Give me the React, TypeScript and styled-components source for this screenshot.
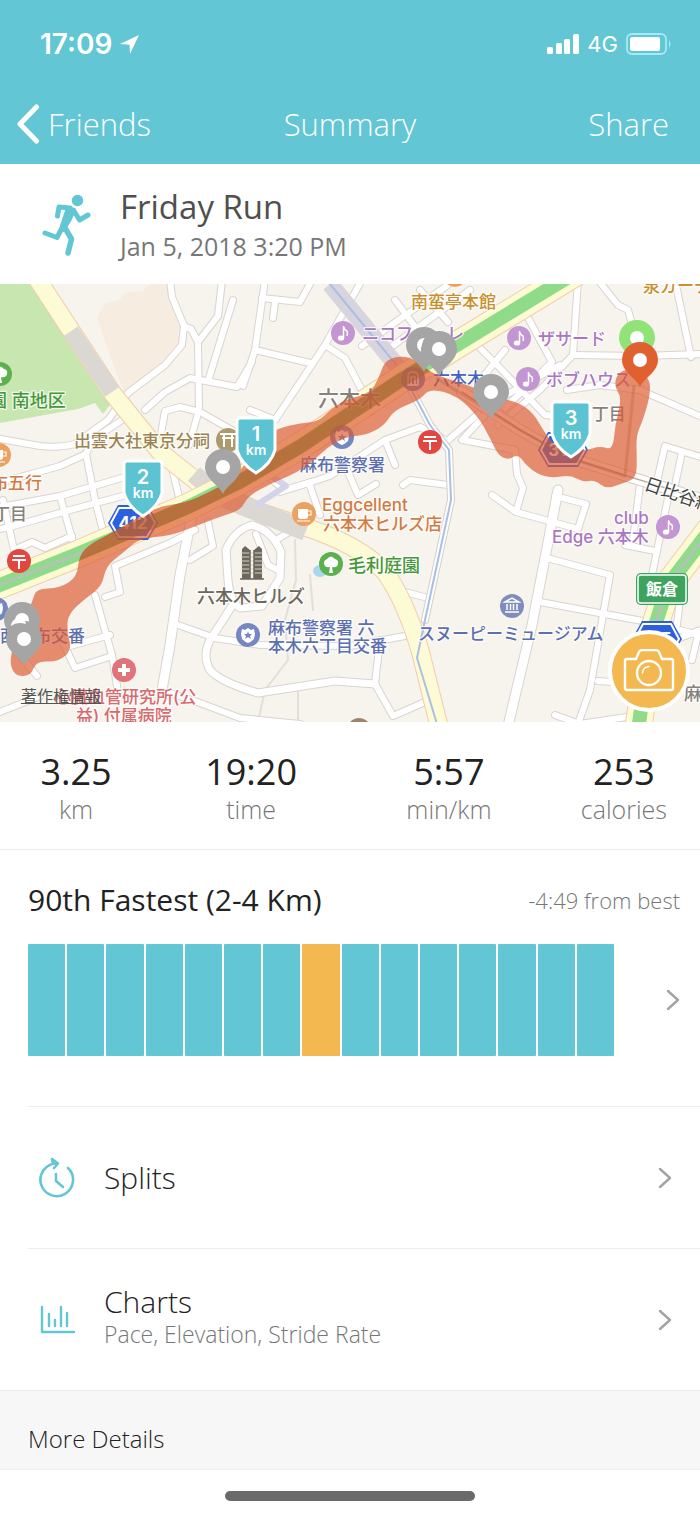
import React from "react";
import styled, { createGlobalStyle } from "styled-components";

const teal = "#62c6d5";
const amber = "#f3b950";
const uiFont = '"Open Sans", "Noto Sans", "Noto Sans CJK JP", sans-serif';
const mapFont = 'Inter, "Noto Sans CJK JP", sans-serif';

const GlobalStyle = createGlobalStyle`
  * { box-sizing: border-box; }
  body {
    margin: 0;
    background: #fff;
    color: #222;
    font-family: ${uiFont};
  }
  button { font-family: inherit; color: inherit; border: 0; padding: 0; background: none; cursor: pointer; }
  h1, h2, h3, p, dl, dt, dd { margin: 0; font-weight: 400; }
  svg { display: block; }
`;

const Screen = styled.div`
  display: flex;
  flex-direction: column;
  min-height: 100vh;
`;

const TopBar = styled.header`
  background: ${teal};
  color: #fff;
`;

const StatusBar = styled.div`
  display: flex;
  align-items: center;
  justify-content: space-between;
  height: 84px;
  padding: 4px 28px 0 40px;
  font-family: Inter, sans-serif;
`;

const StatusGroup = styled.div`
  display: flex;
  align-items: center;
  gap: 8px;
`;

const Clock = styled.span`
  font-size: 28px;
  font-weight: 600;
  line-height: 32px;
`;

const Network = styled.span`
  font-size: 22px;
  font-weight: 400;
  line-height: 32px;
`;

const NavBar = styled.nav`
  display: grid;
  grid-template-columns: 1fr auto 1fr;
  align-items: center;
  height: 80px;
  padding: 0 31px 0 16px;
`;

const NavTitle = styled.h1`
  font-size: 31px;
  font-weight: 300;
  line-height: 40px;
  padding-left: 15px;
`;

const NavButton = styled.button<{ $end?: boolean }>`
  display: flex;
  align-items: center;
  gap: 8px;
  justify-self: ${(p) => (p.$end ? "end" : "start")};
  font-size: 31px;
  font-weight: 300;
  line-height: 40px;
`;

const Activity = styled.section`
  display: flex;
  align-items: center;
  height: 120px;
  padding: 0 28px 0 40px;
  gap: 28px;
`;

const ActivityName = styled.h2`
  font-size: 33px;
  line-height: 44px;
  color: #4f4f4f;
`;

const ActivityDate = styled.p`
  font-size: 25px;
  line-height: 34px;
  color: #777;
`;

const MapPanel = styled.section`
  position: relative;
  overflow: hidden;
  background: #f7f4ee;
`;

const MapCanvas = styled.svg`
  width: 100%;
  height: auto;
  font-family: ${mapFont};
`;

const LegalLink = styled.a`
  position: absolute;
  left: 3%;
  bottom: 16px;
  font-family: ${mapFont};
  font-size: 16px;
  line-height: 20px;
  color: #555;
`;

const CameraButton = styled.button`
  position: absolute;
  right: 10px;
  bottom: 10px;
  display: grid;
  place-items: center;
  width: 82px;
  height: 82px;
  border: 4px solid #fff;
  border-radius: 50%;
  background: ${amber};
`;

const Stats = styled.dl`
  display: grid;
  grid-template-columns: 10fr 13fr 13fr 10fr;
  height: 128px;
  padding-top: 26px;
  border-bottom: 1px solid #ececec;
  text-align: center;
`;

const Stat = styled.div`
  display: flex;
  flex-direction: column-reverse;
  justify-content: flex-end;
`;

const StatValue = styled.dd`
  font-size: 36px;
  line-height: 48px;
`;

const StatLabel = styled.dt`
  font-size: 25px;
  font-weight: 350;
  line-height: 26px;
  color: #777;
`;

const Ranking = styled.section`
  height: 256px;
  padding: 28px 20px 0 28px;
`;

const RankingHead = styled.div`
  display: flex;
  align-items: center;
  justify-content: space-between;
  line-height: 44px;
`;

const RankingTitle = styled.h2`
  font-size: 30px;
`;

const RankingNote = styled.p`
  font-size: 22px;
  font-weight: 350;
  color: #777;
`;

const RankingButton = styled.button`
  display: flex;
  align-items: center;
  width: 100%;
  margin-top: 22px;
`;

const Bars = styled.span`
  display: flex;
  flex: 1;
  gap: 2px;
  height: 112px;
  margin-right: 52px;
`;

const Bar = styled.span<{ $current: boolean }>`
  flex: 1;
  border-radius: 1px;
  background: ${(p) => (p.$current ? amber : teal)};
`;

const List = styled.div`
  padding-left: 28px;
`;

const ListRow = styled.button`
  display: flex;
  align-items: center;
  width: 100%;
  height: 142px;
  padding: 0 28px 0 10px;
  border-top: 1px solid #ececec;
  text-align: left;
`;

const RowIcon = styled.span`
  width: 66px;
`;

const RowText = styled.span`
  display: flex;
  flex: 1;
  flex-direction: column;
`;

const RowTitle = styled.span`
  font-size: 30px;
  font-weight: 350;
  line-height: 36px;
`;

const RowDetail = styled.span`
  margin-bottom: 8px;
  font-size: 23px;
  font-weight: 350;
  line-height: 28px;
  color: #777;
`;

const Details = styled.section`
  height: 80px;
  padding: 30px 28px 0;
  border-top: 1px solid #e8e8e8;
  border-bottom: 1px solid #eee;
  background: #f7f7f7;
`;

const DetailsTitle = styled.h3`
  font-size: 24px;
  font-weight: 350;
  line-height: 36px;
`;

const HomeArea = styled.footer`
  display: flex;
  justify-content: center;
  padding: 21px 0 15px;
`;

const HomeIndicator = styled.span`
  width: 250px;
  height: 10px;
  border-radius: 5px;
  background: #6a6a6a;
`;

const Chevron = () => (
  <svg width="14" height="24" viewBox="0 0 14 24" fill="none" stroke="#a3a3a3" strokeWidth="2.4" strokeLinecap="round" strokeLinejoin="round" aria-hidden="true">
    <path d="M2 3l10 9-10 9" />
  </svg>
);

/* ---------- map drawing ---------- */

const streets = [
  "M170 280L172 297L184 326L182 345L165 365L128 393L108 420L75 444Q60 448 40 446L-5 438",
  "M184 326L191 329L198 342L218 316L222 280",
  "M198 342L199 410L189 445",
  "M233 300L209 378",
  "M145 410L165 392L190 378L237 387L252 362",
  "M160 440L165 411L180 407L200 412L232 430",
  "M-5 484L60 466L86 454L92 440L122 420",
  "M-5 508L60 496L135 474",
  "M86 454L95 500L108 550",
  "M170 460L181 505",
  "M60 496L78 560",
  "M-5 530L10 527L70 510L130 494",
  "M3 500L14 550L32 542L45 548L72 536",
  "M265 280L255 350L243 386",
  "M255 350L310 363",
  "M262 298L300 302L312 280",
  "M275 302L273 318",
  "M362 280L325 345L275 420L250 410",
  "M325 345L345 358L366 398",
  "M362 346L452 282",
  "M384 352L470 290",
  "M395 300L425 340",
  "M420 290L448 322",
  "M280 492L330 476L385 440L420 427L447 441L478 414",
  "M385 440L395 465",
  "M270 478L284 490L312 482",
  "M310 486L320 515",
  "M345 465L358 495L376 484",
  "M403 485L410 480L448 485",
  "M578 280L573 355L540 390L498 425",
  "M573 355L640 356L704 354",
  "M598 280L618 305L628 310L635 335",
  "M675 280L691 357",
  "M480 348L500 368L545 415L570 418",
  "M505 350L482 378",
  "M527 316L552 362L505 408",
  "M506 395L560 365",
  "M484 416L462 440L515 450L517 474L523 488L516 512L492 495",
  "M640 390L704 418",
  "M567 390L600 385L640 390",
  "M655 490L665 446L704 458",
  "M682 452L674 490",
  "M555 496L586 504L578 529L516 512",
  "M547 558L610 575L603 615L590 690L578 724",
  "M540 602L648 622",
  "M640 485L633 540M625 545L655 551",
  "M668 498L652 575",
  "M680 600L675 640L700 630",
  "M680 630L698 635L692 660",
  "M598 681L640 684",
  "M555 715L580 724L640 715",
  "M95 595L112 655L118 692",
  "M105 597L120 592L115 566L170 543L195 530",
  "M60 636L75 668L112 656",
  "M70 646L110 635",
  "M20 655L37 676",
  "M0 712L40 696",
  "M190 560L213 546L208 522",
  "M178 625L215 638L260 645L350 646L405 636",
  "M162 690L200 703L240 718L300 724",
  "M375 684L380 640",
  "M375 684L393 716L425 702",
  "M405 592L428 598",
  "M296 528L276 540",
  "M256 534L268 565L278 570",
];

const wideStreets = [
  "M558 490L545 558L532 625L508 726",
  "M192 515L180 575L170 645L162 690",
];

const plazaStreets = [
  "M281 552L280 578L262 606L240 608Q230 602 228 580L226 550Q234 530 252 525Q272 530 281 552Z",
  "M232 606L210 640Q202 656 210 670Q220 682 258 693L335 681L375 684",
];

const trackPoints: [number, number][] = [
  [33, 600], [36, 589], [60, 588], [77, 577], [79, 556], [90, 544], [110, 534], [135, 519], [160, 506],
  [185, 503], [210, 492], [235, 478], [255, 450], [272, 430], [300, 423], [318, 422], [332, 408], [348, 399],
  [370, 393], [379, 378], [384, 362], [397, 356], [414, 358], [432, 374], [465, 384], [500, 398], [520, 403],
  [534, 414], [543, 430], [556, 448], [585, 451], [600, 446], [613, 450], [615, 425], [622, 398], [614, 386],
  [618, 372], [634, 368], [650, 378], [650, 396], [643, 420], [636, 436], [637, 460], [636, 478], [624, 483],
  [606, 489], [595, 480], [583, 482], [570, 475], [552, 478], [537, 474], [525, 464], [518, 454], [508, 460],
  [498, 455], [490, 438], [479, 418], [458, 396], [430, 388], [420, 400], [394, 410], [384, 426], [366, 435],
  [345, 437], [328, 447], [312, 462], [296, 473], [270, 484], [248, 496], [241, 510], [222, 516], [196, 526],
  [170, 536], [140, 538], [124, 552], [106, 566], [102, 586], [86, 598], [68, 614], [67, 632], [72, 650],
  [58, 662], [36, 661], [31, 676], [14, 676], [9, 658], [20, 630],
];

/* Closed curve through the midpoints of neighbouring points. */
const smooth = (points: [number, number][]) => {
  const mid = (i: number) => {
    const a = points[i % points.length];
    const b = points[(i + 1) % points.length];
    return `${(a[0] + b[0]) / 2} ${(a[1] + b[1]) / 2}`;
  };
  return `M${mid(0)}${points.map((_, i) => {
    const p = points[(i + 1) % points.length];
    return `Q${p[0]} ${p[1]} ${mid(i + 1)}`;
  }).join("")}Z`;
};

const trackPath = smooth(trackPoints);

const Shield = ({ x, y, n }: { x: number; y: number; n: string }) => (
  <g transform={`translate(${x} ${y})`}>
    <path d="M-16 2H16Q19 2 19 5V34Q15 48 0 57Q-15 48 -19 34V5Q-19 2 -16 2Z" fill="#5bc3d2" stroke="#fff" strokeWidth="3" />
    <text textAnchor="middle" y="25" fontSize="20" fontWeight="600" fill="#fff">{n}</text>
    <text textAnchor="middle" y="39" fontSize="14" fontWeight="600" fill="#fff">km</text>
  </g>
);

const Pin = ({ x, y, color = "#a5a5a5" }: { x: number; y: number; color?: string }) => (
  <g transform={`translate(${x} ${y})`}>
    <path d="M0 27C-3 19 -18 12 -18 0A18 18 0 0 1 18 0C18 12 3 19 0 27Z" fill={color} />
    <circle r="7" fill="#fff" />
  </g>
);

type PoiKind = "music" | "post" | "cup" | "tree" | "police" | "museum" | "cross" | "shrine" | "plain";
const poiColors: Record<PoiKind, string> = {
  music: "#c495d3", post: "#e2463f", cup: "#eba15f", tree: "#5cb14c", police: "#7487c2",
  museum: "#7f8dbd", cross: "#e07478", shrine: "#ae9b6b", plain: "#9f8468",
};

const Poi = ({ x, y, kind }: { x: number; y: number; kind: PoiKind }) => (
  <g transform={`translate(${x} ${y})`} stroke="#fff" fill="none" strokeWidth="2">
    <circle r="12" fill={poiColors[kind]} stroke="none" />
    {kind === "music" && (
      <>
        <ellipse cx="-2" cy="5" rx="3.200" ry="2.600" fill="#fff" stroke="none" />
        <path d="M0.500 5V-7Q1 -3 4 -2Q5 0 4 3" strokeWidth="1.500" />
      </>
    )}
    {kind === "post" && <path d="M-6 -5H6M-7 -1H7M0 -1V8" />}
    {kind === "cup" && (
      <>
        <path d="M-6 -5H4V2Q4 5 1 5H-3Q-6 5 -6 2Z" fill="#fff" stroke="none" />
        <path d="M4 -3H7V1H4M-7 7H6" strokeWidth="1.200" />
      </>
    )}
    {kind === "tree" && (
      <path d="M-2 9L-1 3Q-7 4 -7 -1Q-7 -4 -4 -5Q0 -10 4 -5Q8 -4 7 0Q6 4 1 3L2 9Z" fill="#fff" stroke="none" />
    )}
    {kind === "police" && (
      <>
        <path d="M-6 -6L-3 -5L0 -7L3 -5L6 -6L7 -1L6 4Q3 7 0 8Q-3 7 -6 4L-7 -1Z" fill="#fff" stroke="none" />
        <path d="M0 -4L1 -1H4L2 1L3 4L0 2L-3 4L-2 1L-4 -1H-1Z" fill={poiColors.police} stroke="none" />
      </>
    )}
    {kind === "museum" && <path d="M-7 -4L0 -8L7 -4ZM-5 -2V4M-1.500 -2V4M1.500 -2V4M5 -2V4M-7 6H7" strokeWidth="1.500" />}
    {kind === "cross" && <path d="M0 -6V6M-6 0H6" strokeWidth="4" />}
    {kind === "shrine" && <path d="M-8 -6H8M-6 -2H6M-4 -6V7M4 -6V7" />}
  </g>
);

const RouteBadge = ({ x, y, n }: { x: number; y: number; n: string }) => (
  <g transform={`translate(${x} ${y})`}>
    <path d="M-15 -18H15L25 0L15 17H-15L-25 0Z" fill="#2b60de" strokeLinejoin="round" />
    <path d="M-14 -15H14L22 0L14 14H-14L-22 0Z" fill="none" stroke="#fff" strokeWidth="2" strokeLinejoin="round" />
    <text textAnchor="middle" y="6" fontSize="17" fontWeight="700" fill="#fff">{n}</text>
  </g>
);

const c = {
  gold: "#c8902c", violet: "#a877c2", grey: "#85817c", indigo: "#5c6fae", blue: "#4762bd",
  olive: "#9b8450", green: "#46993a", orange: "#d17b40", stone: "#6c675c", red: "#d8696c",
};

const labels: { x: number; y: number; s?: number; fill: string; t: string }[] = [
  { x: 411, y: 308, fill: c.gold, t: "南蛮亭本館" },
  { x: 643, y: 292, fill: c.gold, t: "泉ガーデン" },
  { x: 362, y: 340, fill: c.violet, t: "ニコファーレ" },
  { x: 538, y: 345, fill: c.violet, t: "ザサード" },
  { x: 546, y: 386, fill: c.violet, t: "ボブハウス" },
  { x: 318, y: 406, s: 21, fill: c.grey, t: "六本木" },
  { x: 433, y: 385, fill: c.blue, t: "六本木" },
  { x: 300, y: 471, fill: c.indigo, t: "麻布警察署" },
  { x: 74, y: 447, fill: c.olive, t: "出雲大社東京分祠" },
  { x: -11, y: 407, s: 18, fill: c.green, t: "園 南地区" },
  { x: -9, y: 489, fill: c.orange, t: "布五行" },
  { x: -7, y: 520, fill: c.grey, t: "丁目" },
  { x: 322, y: 511, fill: c.orange, t: "Eggcellent" },
  { x: 323, y: 530, fill: c.orange, t: "六本木ヒルズ店" },
  { x: 614, y: 524, fill: c.violet, t: "club" },
  { x: 552, y: 543, fill: c.violet, t: "Edge 六本木" },
  { x: 348, y: 572, s: 18, fill: c.green, t: "毛利庭園" },
  { x: 197, y: 603, s: 18, fill: c.stone, t: "六本木ヒルズ" },
  { x: 268, y: 634, fill: c.indigo, t: "麻布警察署 六" },
  { x: 268, y: 652, fill: c.indigo, t: "本木六丁目交番" },
  { x: 418, y: 640, fill: c.indigo, t: "スヌーピーミュージアム" },
  { x: 0, y: 642, fill: c.indigo, t: "西麻布交番" },
  { x: 581, y: 420, fill: c.grey, t: "3丁目" },
  { x: 54, y: 703, fill: c.red, t: "心臓血管研究所(公" },
  { x: 76, y: 722, fill: c.red, t: "益) 付属病院" },
  { x: 684, y: 700, s: 18, fill: c.grey, t: "麻布" },
];

const RouteMap = () => (
  <MapCanvas viewBox="0 284 700 438" role="img" aria-label="Route map">
    <defs>
      <clipPath id="track-area">
        <path d={trackPath} />
      </clipPath>
    </defs>
    <rect y="284" width="700" height="438" fill="#f7f4ee" />
    <path d="M0 284H30L112 402L103 414L95 403L78 409L0 423Z" fill="#c7e6b0" />
    <path d="M97 318L105 303L120 300L125 293L143 291L150 284H168L182 322V345L165 365L125 392L117 375L108 350Z" fill="#f6ede0" />
    <ellipse cx="320" cy="571" rx="7" ry="6" fill="#a9d8ee" />

    <g fill="none" strokeLinejoin="round" strokeLinecap="round">
      <g stroke="#e2deda" strokeWidth="2">
        <path d="M295 540L296 580L285 620L288 660L265 690L258 722" />
        <path d="M298 690V722M310 575L313 610" />
      </g>
      <g stroke="#d8d4d2">
        {streets.map((d) => <path key={d} d={d} strokeWidth="8" />)}
        {plazaStreets.map((d) => <path key={d} d={d} strokeWidth="9" />)}
        {wideStreets.map((d) => <path key={d} d={d} strokeWidth="11" />)}
      </g>
      <g stroke="#fff">
        {streets.map((d) => <path key={d} d={d} strokeWidth="6" />)}
        {plazaStreets.map((d) => <path key={d} d={d} strokeWidth="7" />)}
        {wideStreets.map((d) => <path key={d} d={d} strokeWidth="9" />)}
      </g>

      {[["#d3cecd", 12], ["#fff", 10]].map(([stroke, w]) => (
        <path key={stroke} d="M462 392L520 430L570 458L640 480L704 500" stroke={stroke as string} strokeWidth={w} />
      ))}
      <path d="M462 392L520 430L570 458L640 480L704 500" stroke="#b9b3a6" strokeWidth="1.500" />

      {/* railway corridor */}
      <path d="M330 284L402 372" stroke="#d8d4dd" strokeWidth="17" strokeLinecap="butt" />
      <path d="M402 372L430 425L449 450L451 500L425 620" stroke="#d3cecd" strokeWidth="8" />
      <path d="M402 372L430 425L449 450L451 500L425 620" stroke="#fff" strokeWidth="6" />

      {/* avenues */}
      {[["#f1cda9", 19], ["#fdfbd5", 17]].map(([stroke, w]) => (
        <g key={stroke} stroke={stroke as string} strokeWidth={w}>
          <path d="M38 280L72 332L113 394L160 452L200 484L260 512L305 527Q360 545 385 572Q405 600 420 650L440 730" />
        </g>
      ))}
      <g stroke="#dbd7d2" strokeLinecap="butt">
        <path d="M71 331L112 392" strokeWidth="17" />
        <path d="M194 474L214 492" strokeWidth="18" />
        <path d="M225 498L306 531" strokeWidth="20" />
      </g>
      <path d="M258 504L286 486L262 470" stroke="#d3d3ea" strokeWidth="6" />
      <path d="M330 284L402 372L430 425L449 450L451 500L425 620L417 658L437 724" stroke="#a9bfe4" strokeWidth="2" />

      {/* expressways */}
      {[["#f1cda9", 28], ["#fcfbd2", 26], ["#8fdb8a", 14]].map(([stroke, w]) => (
        <g key={stroke} stroke={stroke as string} strokeWidth={w}>
          <path d="M-10 589L80 553L190 506L240 481L300 446L400 380L460 343L580 270" />
          <path d="M710 530L668 585L652 635L638 730" />
        </g>
      ))}
      <path d="M-10 589L80 553L190 506M710 530L668 585L652 635" stroke="#b3c3b5" strokeWidth="3" />
    </g>

    <Poi x={343} y={333} kind="music" />
    <Poi x={519} y={338} kind="music" />
    <Poi x={528} y={379} kind="music" />
    <Poi x={668} y={527} kind="music" />
    <Poi x={430} y={442} kind="post" />
    <Poi x={19} y={561} kind="post" />
    <Poi x={304} y={514} kind="cup" />
    <Poi x={-1} y={455} kind="cup" />
    <Poi x={455} y={275} kind="cup" />
    <Poi x={331} y={564} kind="tree" />
    <Poi x={0} y={374} kind="tree" />
    <Poi x={342} y={437} kind="police" />
    <Poi x={248} y={635} kind="police" />
    <Poi x={-4} y={609} kind="police" />
    <Poi x={512} y={606} kind="museum" />
    <Poi x={124} y={670} kind="cross" />
    <Poi x={228} y={440} kind="shrine" />
    <Poi x={359} y={730} kind="plain" />

    {/* station */}
    <g transform="translate(413 379)" fill="none" stroke="#fff" strokeWidth="1.500">
      <circle r="12" fill="#5f79c8" stroke="none" />
      <path d="M-5 6V-3Q-5 -7 0 -7Q5 -7 5 -3V6ZM-2 6V-2H2V6" />
    </g>

    {/* twin towers landmark */}
    <g transform="translate(252 563)">
      <path d="M-10 16V-14L-7 -17L-2 -13V16ZM2 16V-13L7 -17L10 -14V16Z" fill="#6c675c" />
      <path d="M-11 -10H11M-11 -6H11M-11 -2H11M-11 2H11M-11 6H11M-11 10H11" stroke="#d5d0c5" strokeWidth="1" />
      <path d="M-12 16H12M-2 -13V16M2 -13V16" stroke="#6c675c" strokeWidth="1.500" />
    </g>

    <RouteBadge x={133} y={523} n="412" />
    <RouteBadge x={563} y={450} n="319" />
    <RouteBadge x={657} y={639} n="415" />
    <g>
      <rect x="636" y="573" width="52" height="32" rx="5" fill="#3da35d" />
      <rect x="638" y="575" width="48" height="28" rx="3" fill="none" stroke="#fff" strokeWidth="1.500" />
      <text x="662" y="595" textAnchor="middle" fontSize="16" fontWeight="600" fill="#fff">飯倉</text>
    </g>

    <g fontWeight="500" stroke="#fff" strokeOpacity=".8" strokeWidth="2.500" strokeLinejoin="round" paintOrder="stroke">
      {labels.map((l) => (
        <text key={`${l.x}-${l.y}`} x={l.x} y={l.y} fontSize={l.s ?? 17} fill={l.fill}>{l.t}</text>
      ))}
      <text transform="translate(643 489) rotate(19)" fontSize="18" fontWeight="400" fill="#444">日比谷線</text>
    </g>

    <path d={trackPath} fill="#dd5a30" fillOpacity=".68" />
    <g clipPath="url(#track-area)" fill="none" strokeLinejoin="round">
      <path d="M70 557L190 506L240 482L300 447L400 381L432 362" stroke="#a8602c" strokeOpacity=".5" strokeWidth="14" />
      <path d="M436 378L520 430L570 458L625 476L634 385" stroke="#b8623f" strokeOpacity=".35" strokeWidth="3" />
    </g>

    <Pin x={424} y={345} />
    <Pin x={439} y={349} />
    <path d="M424 338Q416 343 420 352Q422 343 424 338Z" fill="#fff" />
    <Pin x={491} y={392} />
    <Pin x={223} y={467} />
    <Pin x={22} y={620} />
    <Pin x={24} y={639} />
    <path d="M11 626Q12 618 20 618Q25 619 26 624Q17 621 11 626Z" fill="#fff" />
    <Pin x={637} y={338} color="#91e277" />
    <Pin x={640} y={360} color="#e1602f" />
    <Shield x={256} y={416} n="1" />
    <Shield x={143} y={459} n="2" />
    <Shield x={571} y={400} n="3" />
  </MapCanvas>
);

const stats = [
  { value: "3.25", label: "km" },
  { value: "19:20", label: "time" },
  { value: "5:57", label: "min/km" },
  { value: "253", label: "calories" },
];

const BAR_COUNT = 15;
const CURRENT_BAR = 7;

export default function App() {
  return (
    <Screen>
      <GlobalStyle />
      <TopBar>
        <StatusBar>
          <StatusGroup>
            <Clock>17:09</Clock>
            <svg width="19" height="19" viewBox="0 0 19 19" fill="#fff" aria-hidden="true">
              <path d="M19 0L10 19L9.500 9.800L0 9Z" />
            </svg>
          </StatusGroup>
          <StatusGroup>
            <svg width="32" height="20" viewBox="0 0 32 20" fill="#fff" aria-hidden="true">
              <rect y="13" width="6" height="7" rx="1.500" />
              <rect x="9" y="9" width="6" height="11" rx="1.500" />
              <rect x="17" y="5" width="6" height="15" rx="1.500" />
              <rect x="26" width="6" height="20" rx="1.500" />
            </svg>
            <Network>4G</Network>
            <svg width="46" height="22" viewBox="0 0 46 22" aria-hidden="true">
              <rect x="1" y="1" width="39" height="20" rx="5" fill="none" stroke="#a5ebf3" strokeWidth="1.800" />
              <rect x="4" y="4" width="30" height="14" rx="2" fill="#fff" />
              <path d="M43 7Q46 11 43 15Z" fill="#a5ebf3" />
            </svg>
          </StatusGroup>
        </StatusBar>
        <NavBar>
          <NavButton type="button">
            <svg width="24" height="40" viewBox="0 0 24 40" fill="none" stroke="#fff" strokeWidth="5" strokeLinecap="round" strokeLinejoin="round" aria-hidden="true">
              <path d="M20.500 3L4 20l16.500 17" />
            </svg>
            Friends
          </NavButton>
          <NavTitle>Summary</NavTitle>
          <NavButton type="button" $end>Share</NavButton>
        </NavBar>
      </TopBar>

      <main>
        <Activity>
          <svg width="52" height="64" viewBox="0 0 52 64" fill="none" stroke={teal} strokeWidth="5" strokeLinecap="round" strokeLinejoin="round" aria-hidden="true">
            <circle cx="37.500" cy="8.500" r="5.700" fill={teal} stroke="none" />
            <path d="M17.500 24L19 15L30 16" />
            <path d="M34 19L39.500 28L48 23" />
            <path d="M28 16L34 18L29 29L23 38L22 34Z" fill={teal} strokeWidth="4" />
            <path d="M22.500 35L17 45.500L5 41" />
            <path d="M25 36L31.500 47L28 61" strokeWidth="5.500" />
          </svg>
          <div>
            <ActivityName>Friday Run</ActivityName>
            <ActivityDate>Jan 5, 2018 3:20 PM</ActivityDate>
          </div>
        </Activity>

        <MapPanel>
          <RouteMap />
          <LegalLink href="#legal">著作権情報</LegalLink>
          <CameraButton type="button" aria-label="Add photo">
            <svg width="52" height="44" viewBox="0 0 52 44" fill="none" stroke="#fff" strokeWidth="2.400" strokeLinejoin="round" strokeLinecap="round" aria-hidden="true">
              <path d="M4 10H13L16 3Q17 1 19 1H33Q35 1 36 3L39 10H48Q50 10 50 12V39Q50 41 48 41H4Q2 41 2 39V12Q2 10 4 10Z" />
              <circle cx="26" cy="24" r="12" />
              <path d="M19.500 24Q20 18 26 17.500" strokeWidth="1.500" />
            </svg>
          </CameraButton>
        </MapPanel>

        <Stats>
          {stats.map((s) => (
            <Stat key={s.label}>
              <StatLabel>{s.label}</StatLabel>
              <StatValue>{s.value}</StatValue>
            </Stat>
          ))}
        </Stats>

        <Ranking>
          <RankingHead>
            <RankingTitle>90th Fastest (2-4 Km)</RankingTitle>
            <RankingNote>-4:49 from best</RankingNote>
          </RankingHead>
          <RankingButton type="button" aria-label="View ranking">
            <Bars>
              {Array.from({ length: BAR_COUNT }, (_, i) => (
                <Bar key={i} $current={i === CURRENT_BAR} />
              ))}
            </Bars>
            <Chevron />
          </RankingButton>
        </Ranking>

        <List>
          <ListRow type="button">
            <RowIcon>
              <svg width="38" height="42" viewBox="0 0 38 42" fill="none" stroke={teal} strokeWidth="2.600" strokeLinecap="round" strokeLinejoin="round" aria-hidden="true">
                <path d="M30 11A16.300 16.300 0 1 1 19 6.500" />
                <path d="M14 2L20 6.500L16 11M14 2L15 6M18 17V24L25 30" />
              </svg>
            </RowIcon>
            <RowText>
              <RowTitle>Splits</RowTitle>
            </RowText>
            <Chevron />
          </ListRow>
          <ListRow type="button">
            <RowIcon>
              <svg width="38" height="30" viewBox="0 0 38 30" fill="none" stroke={teal} strokeWidth="2.400" strokeLinecap="round" strokeLinejoin="round" aria-hidden="true">
                <path d="M4 2V27H36M11 9V21M17 15V21M23 2V21M29 8V21" />
              </svg>
            </RowIcon>
            <RowText>
              <RowTitle>Charts</RowTitle>
              <RowDetail>Pace, Elevation, Stride Rate</RowDetail>
            </RowText>
            <Chevron />
          </ListRow>
        </List>

        <Details>
          <DetailsTitle>More Details</DetailsTitle>
        </Details>
      </main>

      <HomeArea>
        <HomeIndicator />
      </HomeArea>
    </Screen>
  );
}
